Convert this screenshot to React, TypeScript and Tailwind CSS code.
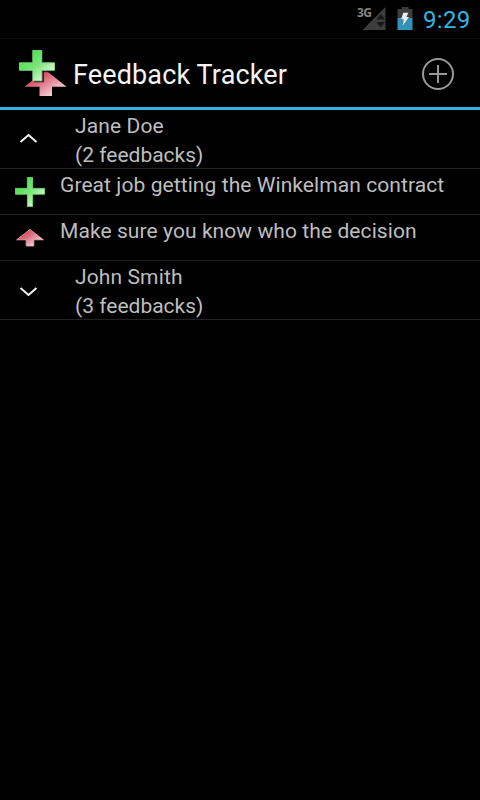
import { useState } from 'react';

type Feedback = { kind: 'positive' | 'improve'; text: string };
type Person = { name: string; count: number; items: Feedback[] };

const PEOPLE: Person[] = [
  {
    name: 'Jane Doe',
    count: 2,
    items: [
      { kind: 'positive', text: 'Great job getting the Winkelman contract' },
      { kind: 'improve', text: 'Make sure you know who the decision' },
    ],
  },
  { name: 'John Smith', count: 3, items: [] },
];

function Gradients() {
  return (
    <svg width="0" height="0" className="absolute">
      <defs>
        <linearGradient id="green" x1="0" y1="0" x2="1" y2="1">
          <stop offset="0.2" stopColor="#4fdf4f" />
          <stop offset="0.5" stopColor="#7ae57a" />
          <stop offset="0.8" stopColor="#d2f5d2" />
        </linearGradient>
        <linearGradient id="red" x1="0" y1="0" x2="1" y2="1">
          <stop offset="0.15" stopColor="#d2304a" />
          <stop offset="0.5" stopColor="#e07f8e" />
          <stop offset="0.85" stopColor="#f6dce0" />
        </linearGradient>
      </defs>
    </svg>
  );
}

function Logo() {
  return (
    <svg width="50" height="48" viewBox="0 0 50 48" className="shrink-0">
      <path d="M27.5 20 L48.5 36.8 H34 V45.9 H21.5 V36.8 H6.5 Z" fill="url(#red)" />
      <path d="M16 15 H26 V22.3 H37 V21 H26 V32.2 H16 Z" fill="#101010" opacity="0.8" />
      <path
        d="M14.8 .5 H23.8 V12.8 H36.5 V20.3 H23.8 V30.7 H14.8 V20.3 H1.5 V12.8 H14.8 Z"
        fill="url(#green)"
        stroke="#8be88b"
        strokeWidth="0.8"
        strokeLinejoin="round"
      />
    </svg>
  );
}

function FeedbackIcon({ kind }: { kind: Feedback['kind'] }) {
  return (
    <svg width="30" height="30" viewBox="0 0 30 30" className="shrink-0">
      {kind === 'positive' ? (
        <path
          d="M12.4 .4 H17.6 V11.4 H29.6 V17.2 H17.6 V29.6 H12.4 V17.2 H.4 V11.4 H12.4 Z"
          fill="url(#green)"
          stroke="#7be57b"
          strokeWidth="0.8"
        />
      ) : (
        <path d="M15 6.5 L28.4 16.8 H18.8 V23 H11.2 V16.8 H1.6 Z" fill="url(#red)" stroke="#eeb0b8" strokeWidth="0.8" />
      )}
    </svg>
  );
}

function StatusBar() {
  return (
    <div className="flex h-[38px] shrink-0 pr-[10px] justify-end">
      {/* Signal */}
      <div className="relative w-[30px]">
        <svg width="30" height="38" viewBox="0 0 30 38">
          <path d="M28.5 7 V30 H5.5 Z" fill="#3d3d3d" />
          <path d="M23.8 14 L28 19.5 H19.6 Z M23.8 27.5 L28 22 H19.6 Z" fill="#171717" />
        </svg>
        <span className="absolute left-0 top-[5px] text-[12px] leading-[15px] font-bold tracking-[-0.5px] text-[#858585] font-['Noto_Sans',sans-serif]">3G</span>
      </div>
      {/* Battery */}
      <svg width="16" height="38" viewBox="0 0 16 38" className="ml-[10px]">
        <path d="M4.5 7 H11.5 V9 H15.5 V18 H.5 V9 H4.5 Z" fill="#3d3d3d" />
        <path d="M.5 18 H15.5 V30 H.5 Z" fill="#3192b8" />
        <path d="M6.2 12.7 H11.3 L9.5 17 H12 L5.4 26 L7 19.3 H4.2 Z" fill="#ededed" />
      </svg>
      <span className="ml-[10px] w-[47px] text-[24px] leading-[40px] tracking-[0.3px] text-[#33b5e5] whitespace-nowrap">9:29</span>
    </div>
  );
}

export default function App() {
  const [open, setOpen] = useState<string[]>(['Jane Doe']);

  function toggle(name: string) {
    setOpen(open.includes(name) ? open.filter(n => n !== name) : [...open, name]);
  }

  return (
    <div className="relative w-[480px] h-[800px] bg-black overflow-hidden flex flex-col font-['Roboto',sans-serif]">
      <Gradients />
      <StatusBar />

      {/* Action bar */}
      <header className="h-[72px] shrink-0 flex items-center border-t border-t-[#0c0c0c] border-b-3 border-b-[#33b5e5] pt-[2px] pl-[18px] pr-[25px]">
        <Logo />
        <h1 className="ml-[5px] pt-[2px] text-[27px] leading-[32px] tracking-[0.14px] text-[#f3f3f3] whitespace-nowrap">Feedback Tracker</h1>
        <button className="ml-auto" aria-label="Add feedback">
          <svg width="34" height="34" viewBox="0 0 34 34" fill="none" stroke="#999999" strokeWidth="2" className="block">
            <circle cx="17" cy="17" r="15" />
            <path d="M17 8 V26 M8 17 H26" />
          </svg>
        </button>
      </header>

      <main className="text-[21px] leading-[29px] text-[#bebebe]">
        {PEOPLE.map(p => (
          <section key={p.name}>
            <button
              onClick={() => toggle(p.name)}
              className="w-full h-[59px] flex text-left border-b border-[#222222] pl-[19px]"
            >
              <svg width="19" height="58" viewBox="0 0 19 58" fill="none" stroke="#f3f3f3" strokeWidth="2" className="shrink-0">
                <path d={open.includes(p.name) ? 'M1.5 32 L9.5 25 L17.5 32' : 'M1.5 27 L9.5 34 L17.5 27'} />
              </svg>
              <span className="ml-[37px] pt-[2px]">
                <span className="tracking-[0.12px]">{p.name}</span>
                <br />({p.count} feedbacks)
              </span>
            </button>
            {open.includes(p.name) &&
              p.items.map(f => (
                <div key={f.text} className="h-[46px] flex items-start border-b border-[#222222] pl-[15px]">
                  <div className="pt-[8px]">
                    <FeedbackIcon kind={f.kind} />
                  </div>
                  <p className="ml-[15px] pt-[2px] tracking-[0.08px] whitespace-nowrap">{f.text}</p>
                </div>
              ))}
          </section>
        ))}
      </main>
    </div>
  );
}
